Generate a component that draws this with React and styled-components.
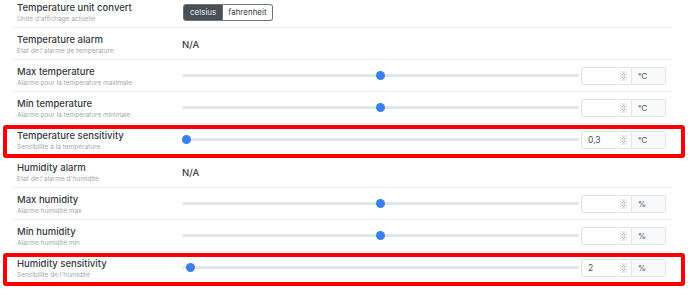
import React from "react";
import styled, { createGlobalStyle } from "styled-components";

const GlobalStyle = createGlobalStyle`
  body {
    margin: 0;
    background: #ffffff;
    font-family: "Inter", "Open Sans", sans-serif;
    overflow: hidden;
  }
`;

const Page = styled.div`
  width: 690px;
  height: 290px;
  overflow: hidden;
`;

const List = styled.div`
  margin: -4px 0 0 11px;
  width: 661px;
`;

const Row = styled.div`
  position: relative;
  display: grid;
  grid-template-columns: 171px 1fr;
  align-items: center;
  height: 32px;
  box-sizing: border-box;
  padding-right: 6px;
  border-bottom: 1px solid #eceef1;

  &::after {
    content: "";
    display: ${(props) => (props.$highlight ? "block" : "none")};
    position: absolute;
    left: -8px;
    right: -13px;
    top: 1px;
    bottom: -3px;
    border: 4px solid #ff0000;
    border-radius: 3px;
    pointer-events: none;
  }
`;

const Label = styled.div`
  display: flex;
  flex-direction: column;
  align-self: start;
  padding: 5px 0 0 6px;
`;

const Title = styled.span`
  font-size: 9.5px;
  line-height: 13px;
  font-weight: 500;
  color: #343a40;
`;

const Sub = styled.span`
  font-size: 6.5px;
  line-height: 10px;
  color: #a2a7ac;
`;

const Value = styled.div`
  display: flex;
  align-items: center;
  gap: 2px;
`;

const Text = styled.span`
  font-size: 9.5px;
  font-weight: 500;
  color: #343a40;
  margin-top: 1px;
`;

const Toggle = styled.div`
  display: flex;
  height: 17px;
  margin: 1px 0 0 1px;
`;

const ToggleButton = styled.div`
  display: flex;
  align-items: center;
  padding: 0 ${(props) => (props.$active ? "6px" : "5px")};
  font-size: 8px;
  color: ${(props) => (props.$active ? "#e4e7ea" : "#343a40")};
  background: ${(props) => (props.$active ? "#495057" : "#ffffff")};
  border: 1px solid #6c757d;
  border-radius: ${(props) => (props.$active ? "3px 0 0 3px" : "0 3px 3px 0")};
  border-left-width: ${(props) => (props.$active ? "1px" : "0")};
`;

const Range = styled.input`
  -webkit-appearance: none;
  appearance: none;
  flex: 1;
  margin: 0;
  height: 9px;
  background: transparent;

  &::-webkit-slider-runnable-track {
    height: 3px;
    background: #e1e5ea;
    border-radius: 2px;
  }

  &::-webkit-slider-thumb {
    -webkit-appearance: none;
    width: 9px;
    height: 9px;
    margin-top: -3px;
    border-radius: 50%;
    background: #3a80ec;
    border: none;
  }
`;

const InputGroup = styled.div`
  display: flex;
  width: 85px;
  height: 18px;
`;

const NumberBox = styled.div`
  display: flex;
  align-items: center;
  width: 51px;
  box-sizing: border-box;
  border: 1px solid #e3e6e9;
  border-radius: 2px 0 0 2px;
  background: #ffffff;
  padding: 0 4px 0 6px;
`;

const NumberText = styled.input`
  flex: 1;
  min-width: 0;
  border: none;
  outline: none;
  padding: 0;
  font-family: "Inter", sans-serif;
  font-size: 8.5px;
  color: #495057;
  background: transparent;
`;

const Spinner = styled.span`
  display: flex;
  width: 7px;
  height: 10px;
  background: #e9ecef;
  border-radius: 1px;
`;

const Unit = styled.div`
  display: flex;
  align-items: center;
  flex: 1;
  box-sizing: border-box;
  padding-left: 6px;
  border: 1px solid #e3e6e9;
  border-left: none;
  border-radius: 0 2px 2px 0;
  background: #f8f9fa;
  font-size: 8px;
  color: #495057;
`;

const rows = [
  { title: "Temperature unit convert", sub: "Unité d'affichage actuelle", kind: "toggle" },
  { title: "Temperature alarm", sub: "Etat de l'alarme de température", kind: "text" },
  { title: "Max temperature", sub: "Alarme pour la température maximale", kind: "slider", value: 50, input: "", unit: "°C" },
  { title: "Min temperature", sub: "Alarme pour la température minimale", kind: "slider", value: 50, input: "", unit: "°C" },
  { title: "Temperature sensitivity", sub: "Sensibilité à la température", kind: "slider", value: 0, input: "0,3", unit: "°C", highlight: true },
  { title: "Humidity alarm", sub: "Etat de l'alarme d'humidité", kind: "text" },
  { title: "Max humidity", sub: "Alarme humidité max", kind: "slider", value: 50, input: "", unit: "%" },
  { title: "Min humidity", sub: "Alarme humidité min", kind: "slider", value: 50, input: "", unit: "%" },
  { title: "Humidity sensitivity", sub: "Sensibilité de l'humidité", kind: "slider", value: 1, input: "2", unit: "%", highlight: true },
];

const SpinIcon = () => (
  <Spinner>
    <svg width="7" height="10" viewBox="0 0 7 10">
      <path d="M2 4 L3.5 2.5 L5 4" fill="none" stroke="#9aa0a6" strokeWidth="0.8" />
      <path d="M2 6 L3.5 7.5 L5 6" fill="none" stroke="#9aa0a6" strokeWidth="0.8" />
    </svg>
  </Spinner>
);

const SettingValue = ({ row }) => {
  if (row.kind === "toggle") {
    return (
      <Toggle>
        <ToggleButton $active>celsius</ToggleButton>
        <ToggleButton>fahrenheit</ToggleButton>
      </Toggle>
    );
  }
  if (row.kind === "text") {
    return <Text>N/A</Text>;
  }
  return (
    <>
      <Range type="range" min="0" max="100" defaultValue={row.value} />
      <InputGroup>
        <NumberBox>
          <NumberText type="text" defaultValue={row.input} readOnly />
          <SpinIcon />
        </NumberBox>
        <Unit>{row.unit}</Unit>
      </InputGroup>
    </>
  );
};

export default function App() {
  return (
    <Page>
      <GlobalStyle />
      <List>
        {rows.map((row) => (
          <Row key={row.title} $highlight={row.highlight}>
            <Label>
              <Title>{row.title}</Title>
              <Sub>{row.sub}</Sub>
            </Label>
            <Value>
              <SettingValue row={row} />
            </Value>
          </Row>
        ))}
      </List>
    </Page>
  );
}
